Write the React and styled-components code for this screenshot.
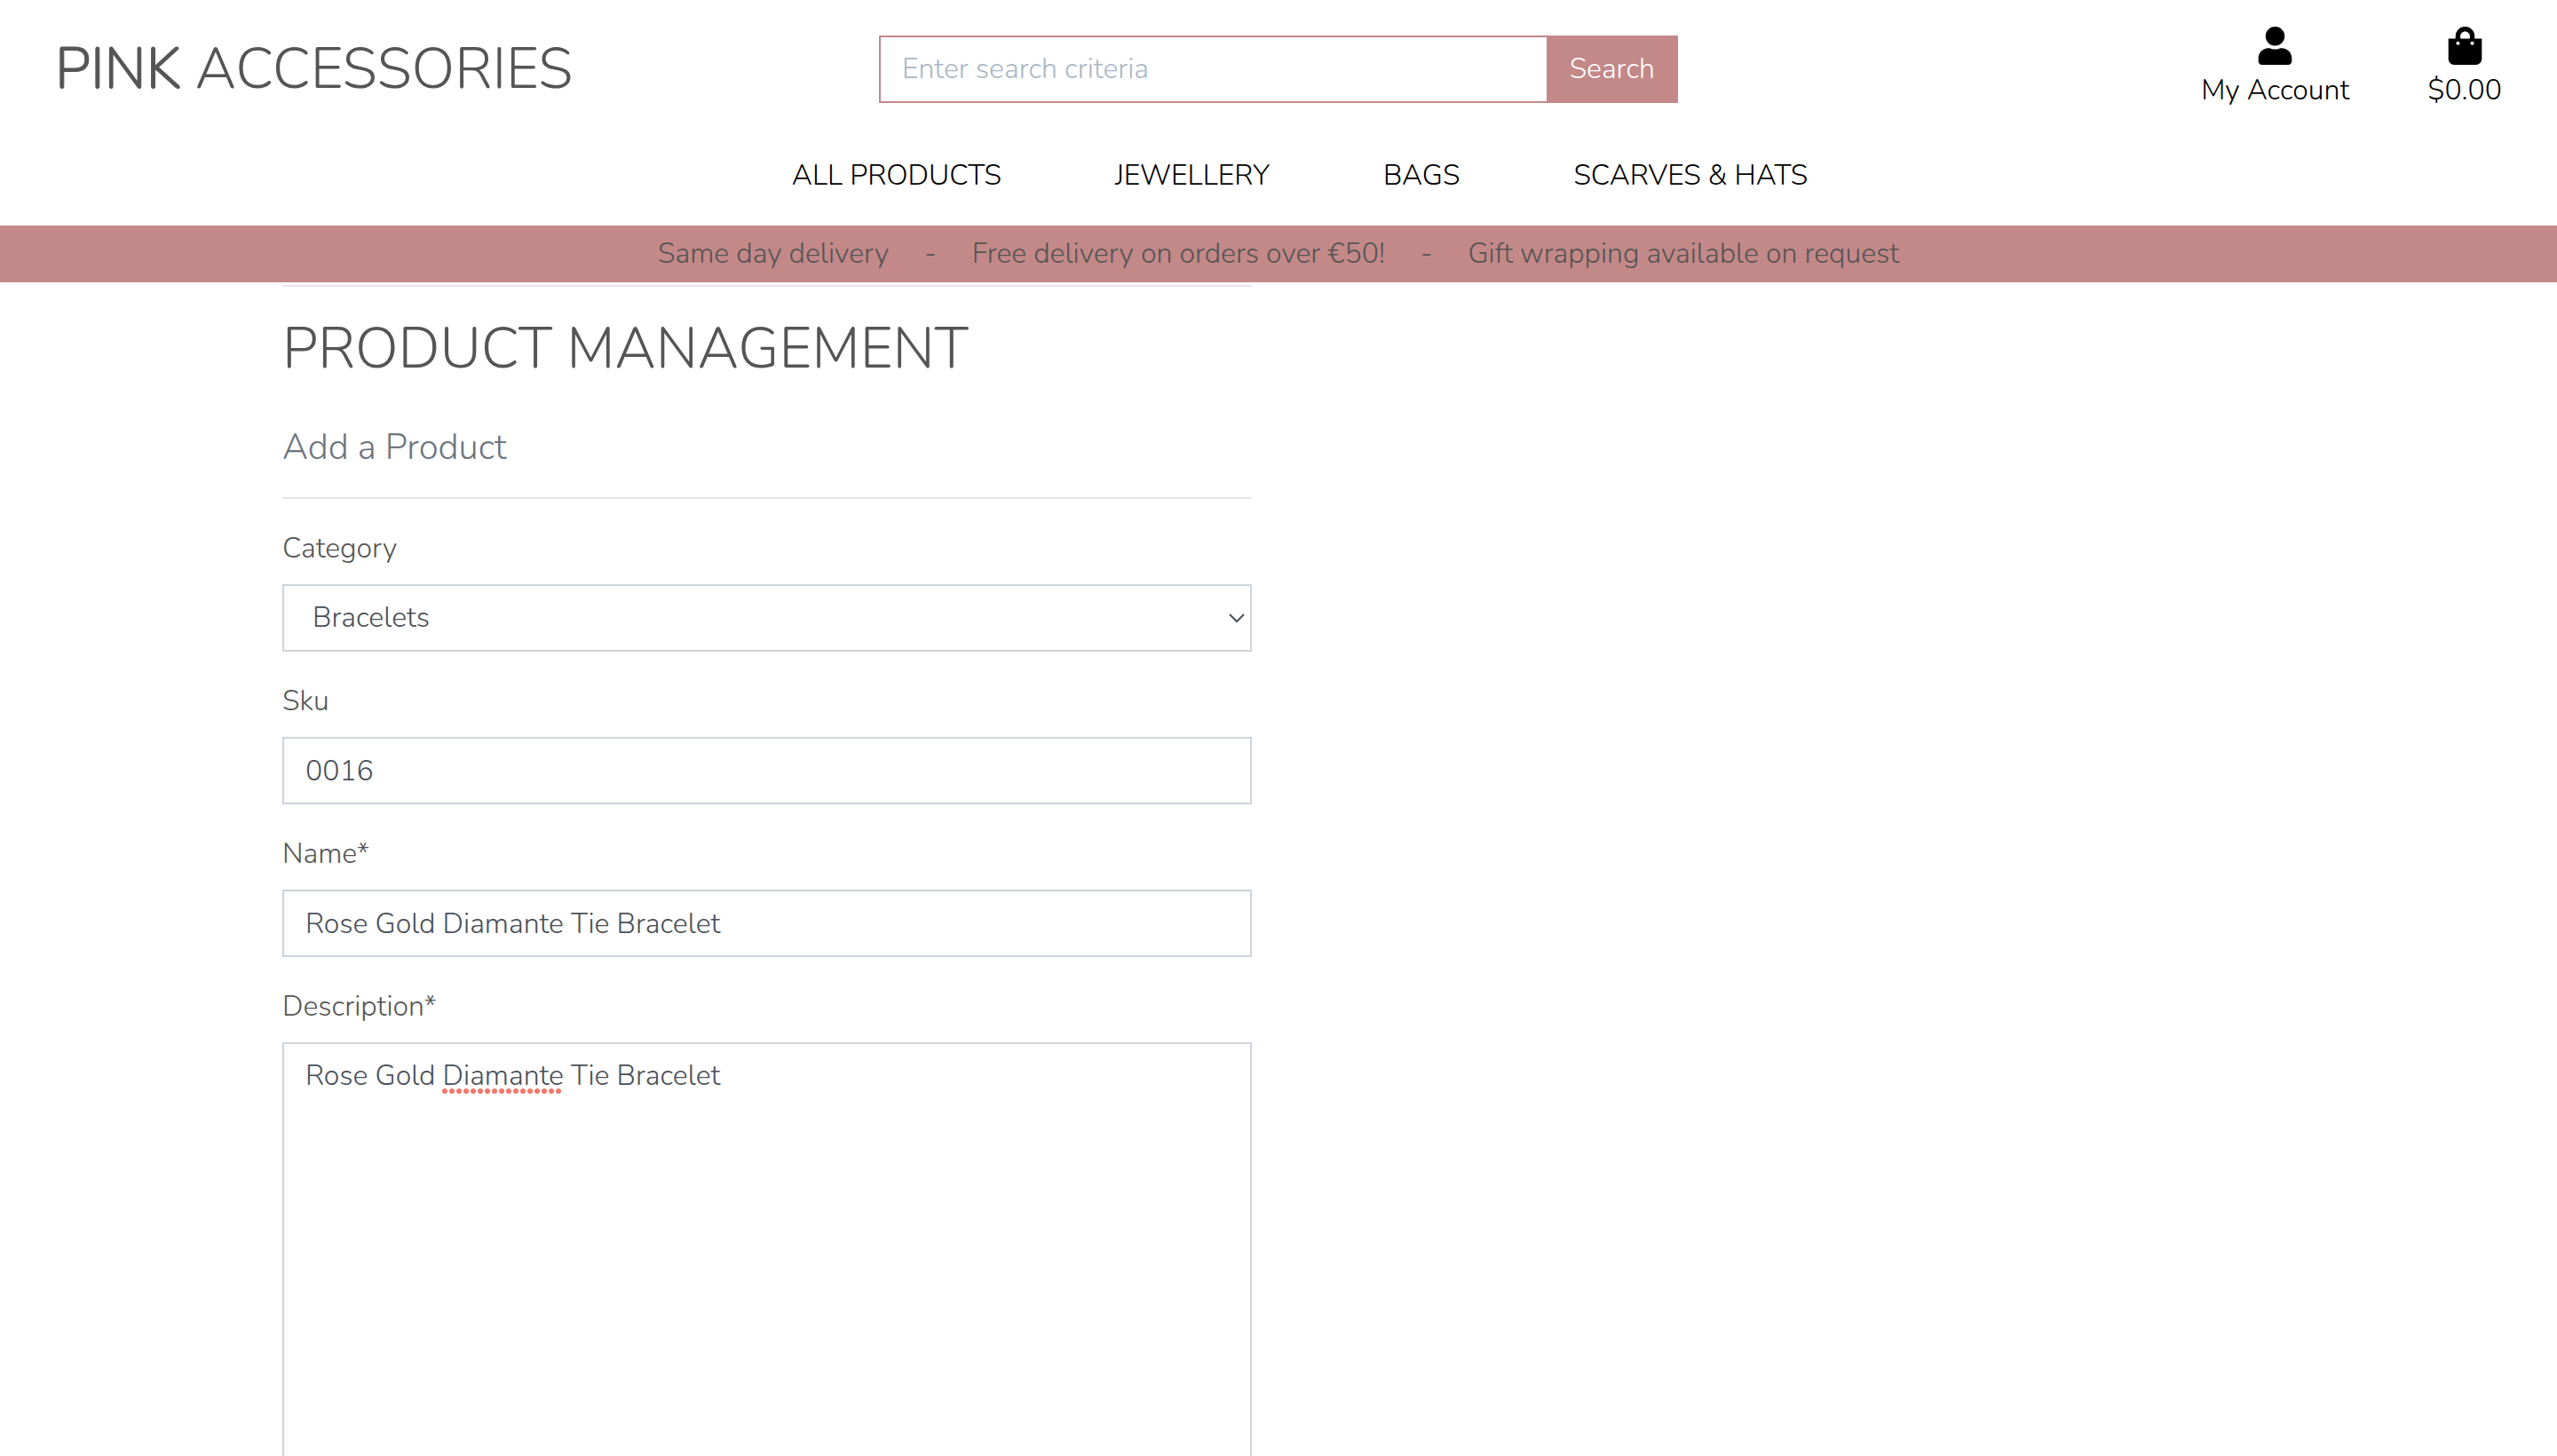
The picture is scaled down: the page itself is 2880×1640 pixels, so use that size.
import React from "react";
import styled, { createGlobalStyle } from "styled-components";
import { FaShoppingBag, FaUser } from "react-icons/fa";

const PINK = "#c38888";
const GREY = "#555555";

const GlobalStyle = createGlobalStyle`
  *, *::before, *::after { box-sizing: border-box; }
  body {
    margin: 0;
    background: #fff;
    color: ${GREY};
    font: 300 32px/48px Nunito, Lato, "Open Sans", sans-serif;
  }
  input, select, textarea, button { font: inherit; border-radius: 0; }
`;

const Page = styled.div`
  display: flex;
  flex-direction: column;
  height: 100vh;
`;

const TopBar = styled.header`
  display: grid;
  grid-template-columns: 1fr 900px 1fr;
  align-items: center;
  min-height: 156px;
  padding: 0 62px;
`;

const Logo = styled.a`
  justify-self: start;
  color: ${GREY};
  font-size: 64px;
  line-height: 77px;
  text-decoration: none;
`;

const LogoStrong = styled.strong`
  font-weight: 300;
  -webkit-text-stroke: 1px ${GREY};
`;

const SearchForm = styled.form`
  display: flex;
  height: 76px;
`;

const SearchInput = styled.input`
  flex: 1;
  min-width: 0;
  padding: 12px 24px;
  border: 2px solid ${PINK};
  border-right: 0;
  background: #fff;
  color: #495057;
  outline: 0;

  &::placeholder {
    color: #aab7c4;
    opacity: 1;
  }
`;

const SearchButton = styled.button`
  padding: 0 24px;
  border: 2px solid ${PINK};
  background: ${PINK};
  color: #fff;
`;

const Shortcuts = styled.div`
  display: flex;
  justify-self: end;
  gap: 88px;
`;

const Shortcut = styled.a`
  display: flex;
  flex-direction: column;
  align-items: center;
  color: #000;
  text-decoration: none;

  svg {
    height: 43px;
    width: auto;
    margin-bottom: 5px;
  }
`;

const Nav = styled.nav`
  display: flex;
  justify-content: center;
  gap: 128px;
  padding: 18px 0 32px 48px;
`;

const NavLink = styled.a`
  color: #000;
  text-decoration: none;
`;

const Banner = styled.div`
  display: flex;
  flex-shrink: 0;
  justify-content: center;
  gap: 40px;
  padding: 8px 0;
  background: ${PINK};
`;

const Main = styled.main`
  flex: 1;
  min-height: 0;
  overflow-y: auto;
  scrollbar-width: none;
`;

const Container = styled.div`
  display: grid;
  grid-template-columns: 1fr 1fr;
  gap: 60px;
  max-width: 2244px;
  margin: 0 auto;
  padding: 3px 0 64px;
`;

const Rule = styled.hr`
  height: 2px;
  margin: ${(p) => (p.$spaced ? "32px 0" : "0 0 32px")};
  border: 0;
  background: rgba(0, 0, 0, 0.1);
`;

const Title = styled.h2`
  margin: 0 0 48px;
  font-size: 64px;
  font-weight: 300;
  line-height: 77px;
`;

const Subtitle = styled.h5`
  margin: 0;
  color: #6c757d;
  font-size: 40px;
  font-weight: 300;
  line-height: 48px;
`;

const Form = styled.form`
  display: grid;
  gap: 32px;
`;

const Field = styled.div`
  display: grid;
  gap: 16px;
`;

const Control = styled.div`
  position: relative;
  display: grid;
`;

const Input = styled.input`
  width: 100%;
  height: 76px;
  padding: 12px 24px;
  border: 2px solid #ced4da;
  background: #fff;
  color: #495057;
`;

const Select = styled.select`
  width: 100%;
  height: 76px;
  padding: 12px 32px;
  border: 2px solid #ced4da;
  background: #fff;
  color: #495057;
  appearance: none;
`;

const TextArea = styled.textarea`
  display: block;
  width: 100%;
  padding: 12px 24px;
  border: 2px solid #ced4da;
  background: #fff;
  color: #495057;
  resize: vertical;
`;

const Chevron = styled.svg`
  position: absolute;
  right: 8px;
  top: 32px;
  pointer-events: none;
`;

/* Dotted spelling mark under the third word of the description. */
const SpellingMark = styled.span`
  position: absolute;
  left: 180px;
  top: 52px;
  width: 136px;
  height: 6px;
  background: radial-gradient(circle at 3px 3px, #f2796e 2.6px, transparent 3.4px) 0 0 / 8px 6px;
  pointer-events: none;
`;

const NAV = ["ALL PRODUCTS", "JEWELLERY", "BAGS", "SCARVES & HATS"];
const OFFERS = [
  "Same day delivery",
  "-",
  "Free delivery on orders over €50!",
  "-",
  "Gift wrapping available on request",
];
const CATEGORIES = ["Bracelets", "Earrings", "Necklaces", "Bags", "Scarves", "Hats"];

export default function App() {
  return (
    <Page>
      <GlobalStyle />
      <TopBar>
        <Logo href="#home">
          <LogoStrong>PINK</LogoStrong> ACCESSORIES
        </Logo>
        <SearchForm role="search" onSubmit={(e) => e.preventDefault()}>
          <SearchInput type="text" name="q" aria-label="Search" placeholder="Enter search criteria" />
          <SearchButton type="submit">Search</SearchButton>
        </SearchForm>
        <Shortcuts>
          <Shortcut href="#account">
            <FaUser aria-hidden="true" />
            My Account
          </Shortcut>
          <Shortcut href="#bag">
            <FaShoppingBag aria-hidden="true" />
            $0.00
          </Shortcut>
        </Shortcuts>
      </TopBar>
      <Nav>
        {NAV.map((label) => (
          <NavLink key={label} href="#products">
            {label}
          </NavLink>
        ))}
      </Nav>
      <Banner>
        {OFFERS.map((text, i) => (
          <span key={i}>{text}</span>
        ))}
      </Banner>
      <Main>
        <Container>
          <section>
            <Rule />
            <Title>PRODUCT MANAGEMENT</Title>
            <Subtitle>Add a Product</Subtitle>
            <Rule $spaced />
            <Form onSubmit={(e) => e.preventDefault()}>
              <Field>
                <label htmlFor="category">Category</label>
                <Control>
                  <Select id="category" defaultValue="Bracelets">
                    {CATEGORIES.map((c) => (
                      <option key={c}>{c}</option>
                    ))}
                  </Select>
                  <Chevron width="18" height="12" viewBox="0 0 18 12" fill="none" aria-hidden="true">
                    <path d="M1 2 L9 10 L17 2" stroke="#495057" strokeWidth="2" />
                  </Chevron>
                </Control>
              </Field>
              <Field>
                <label htmlFor="sku">Sku</label>
                <Input id="sku" type="text" defaultValue="0016" />
              </Field>
              <Field>
                <label htmlFor="name">Name*</label>
                <Input id="name" type="text" defaultValue="Rose Gold Diamante Tie Bracelet" />
              </Field>
              <Field>
                <label htmlFor="description">Description*</label>
                <Control>
                  <TextArea
                    id="description"
                    rows={10}
                    spellCheck={false}
                    defaultValue="Rose Gold Diamante Tie Bracelet"
                  />
                  <SpellingMark />
                </Control>
              </Field>
            </Form>
          </section>
        </Container>
      </Main>
    </Page>
  );
}
